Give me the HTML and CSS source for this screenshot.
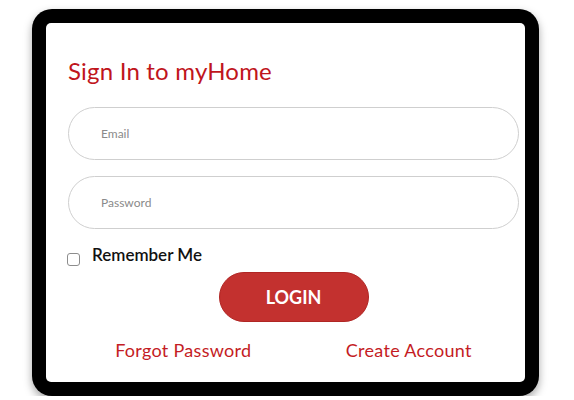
FILE: index.html
```html
<!DOCTYPE html>
<html lang="en">
<head>
  <meta charset="UTF-8" />
  <meta name="viewport" content="width=device-width, initial-scale=1.0"/>
  <title>Sign In to myHome</title>
  <link rel="stylesheet" href="styles.css">
</head>
<body>
  <div class="tablet">
    <div class="screen">
      <form class="login-form" onsubmit="return false">
        <h1 class="title">Sign In to myHome</h1>
        <input class="field" type="email" placeholder="Email">
        <input class="field" type="password" placeholder="Password">
        <label class="remember">
          <input type="checkbox" class="check">
          <span>Remember Me</span>
        </label>
        <button class="btn-login" type="submit">LOGIN</button>
        <div class="links">
          <a href="#" class="link">Forgot Password</a>
          <a href="#" class="link">Create Account</a>
        </div>
      </form>
    </div>
  </div>
</body>
</html>
```

FILE: styles.css
```css
body {
  margin: 0;
  background: #fff;
  font-family: 'Lato', 'Open Sans', sans-serif;
}

.tablet {
  margin: 9px 0 0 32px;
  width: 479px;
  height: 359px;
  padding: 14px;
  background: #000;
  border-radius: 20px;
  box-shadow: 0 4px 8px rgba(0,0,0,0.35);
}

.screen {
  background: #fff;
  border-radius: 5px;
  height: 100%;
  overflow: hidden;
}

.login-form {
  display: flex;
  flex-direction: column;
  width: 451px;
  padding: 34px 0 0 22px;
}

.title {
  margin: 0 0 22px;
  font-size: 24px;
  font-weight: 400;
  line-height: 28px;
  letter-spacing: 0.2px;
  color: #c0151c;
}

.field {
  box-sizing: border-box;
  height: 53px;
  margin-bottom: 16px;
  padding: 0 32px;
  border: 1.5px solid #cfcfcf;
  border-radius: 27px;
  font-family: inherit;
  font-size: 12px;
  color: #333;
  outline: none;
}

.field::placeholder {
  color: #8a8a8a;
}

.remember {
  display: flex;
  align-items: flex-start;
  gap: 12px;
  margin: 0 0 6px -1px;
  font-size: 17px;
  font-weight: 600;
  line-height: 20px;
  color: #111;
}

.check {
  width: 13px;
  height: 13px;
  margin: 8px 0 0;
  appearance: none;
  border: 1.5px solid #8d8d8d;
  border-radius: 3px;
  background: #fff;
}

.btn-login {
  align-self: center;
  width: 150px;
  height: 50px;
  border: 1px solid #b02624;
  border-radius: 25px;
  background: #c3312f;
  color: #fff;
  font-family: inherit;
  font-size: 18px;
  font-weight: 700;
  cursor: pointer;
}

.links {
  display: flex;
  justify-content: space-around;
  margin-top: 17px;
}

.link {
  color: #c41c24;
  font-size: 18px;
  letter-spacing: 0.3px;
  text-decoration: none;
}
```
